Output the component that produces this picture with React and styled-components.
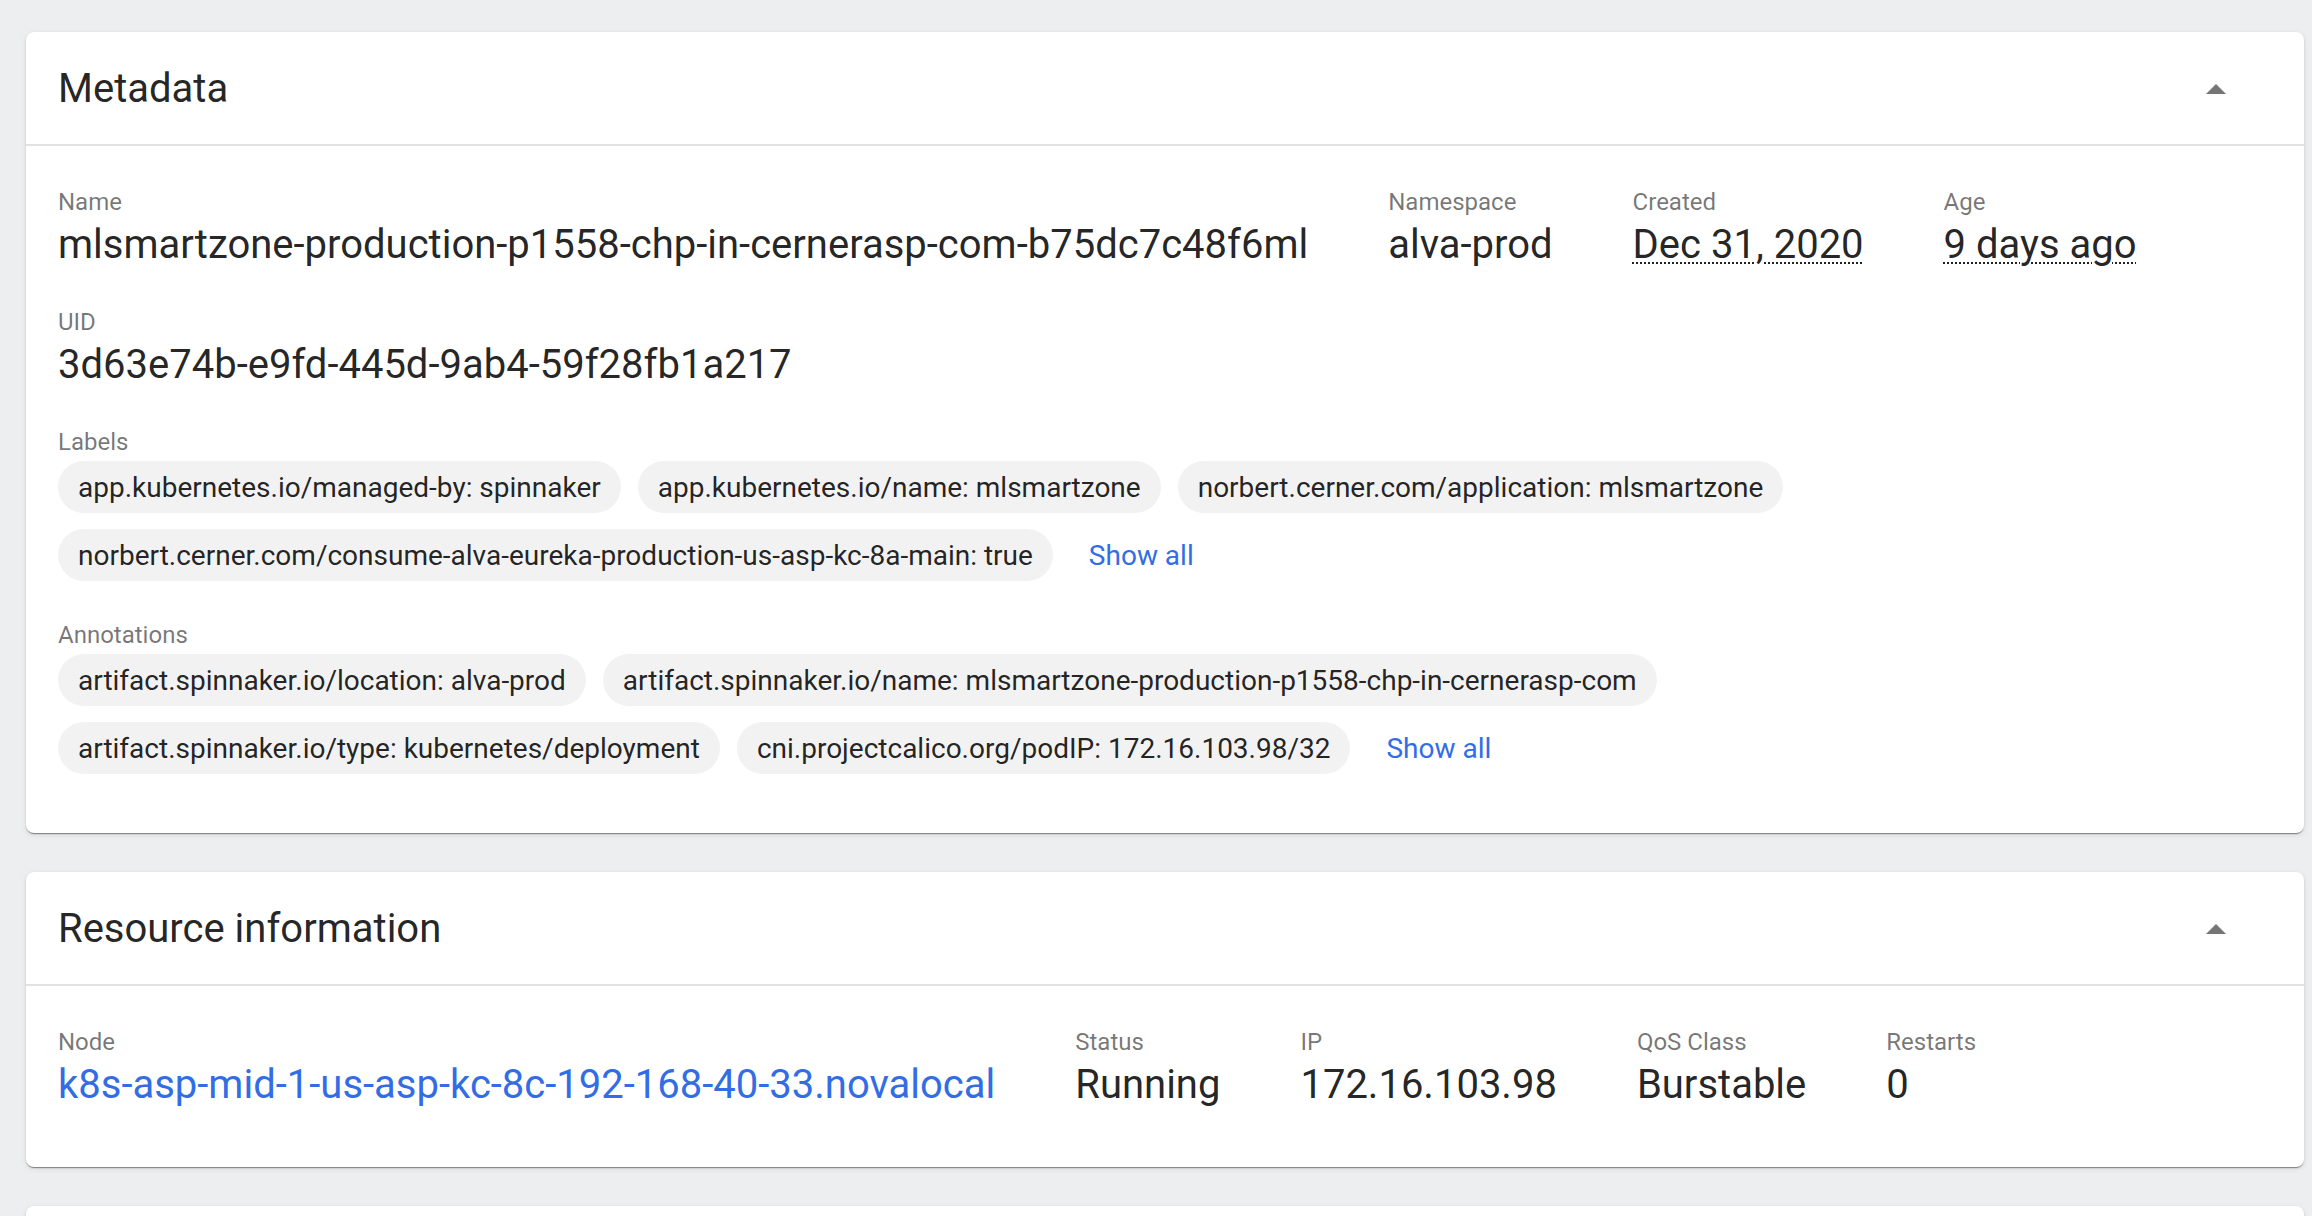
import styled, { createGlobalStyle } from "styled-components";

const GlobalStyle = createGlobalStyle`
  html, body {
    margin: 0;
    padding: 0;
    background: #edeef0;
    font-family: Roboto, "Liberation Sans", sans-serif;
  }
`;

const metaTop = [
  { label: "Name", value: "mlsmartzone-production-p1558-chp-in-cernerasp-com-b75dc7c48f6ml" },
  { label: "Namespace", value: "alva-prod" },
  { label: "Created", value: "Dec 31, 2020", dotted: true },
  { label: "Age", value: "9 days ago", dotted: true },
];

const labels = [
  "app.kubernetes.io/managed-by: spinnaker",
  "app.kubernetes.io/name: mlsmartzone",
  "norbert.cerner.com/application: mlsmartzone",
  "norbert.cerner.com/consume-alva-eureka-production-us-asp-kc-8a-main: true",
];

const annotations = [
  "artifact.spinnaker.io/location: alva-prod",
  "artifact.spinnaker.io/name: mlsmartzone-production-p1558-chp-in-cernerasp-com",
  "artifact.spinnaker.io/type: kubernetes/deployment",
  "cni.projectcalico.org/podIP: 172.16.103.98/32",
];

const resource = [
  { label: "Node", value: "k8s-asp-mid-1-us-asp-kc-8c-192-168-40-33.novalocal", link: true },
  { label: "Status", value: "Running" },
  { label: "IP", value: "172.16.103.98" },
  { label: "QoS Class", value: "Burstable" },
  { label: "Restarts", value: "0" },
];

const ArrowUp = () => (
  <svg width="20" height="10" viewBox="0 0 20 10">
    <path d="M0 10 L10 0 L20 10 Z" fill="#757575" />
  </svg>
);

const Card = ({ title, children }) => (
  <Panel>
    <Header>
      <Title>{title}</Title>
      <Toggle>
        <ArrowUp />
      </Toggle>
    </Header>
    {children}
  </Panel>
);

const Chips = ({ items }) => (
  <ChipWrap>
    {items.map((c) => (
      <Chip key={c}>{c}</Chip>
    ))}
    <ShowAll>Show all</ShowAll>
  </ChipWrap>
);

const App = () => {
  return (
    <Page>
      <GlobalStyle />
      <Card title="Metadata">
        <Body>
          <Row>
            {metaTop.map((f) => (
              <Field key={f.label}>
                <Label>{f.label}</Label>
                <Value dotted={f.dotted ? 1 : 0}>
                  <span>{f.value}</span>
                </Value>
              </Field>
            ))}
          </Row>
          <Row>
            <Field>
              <Label>UID</Label>
              <Value>3d63e74b-e9fd-445d-9ab4-59f28fb1a217</Value>
            </Field>
          </Row>
          <Section>
            <Label>Labels</Label>
            <Chips items={labels} />
          </Section>
          <Section>
            <Label>Annotations</Label>
            <Chips items={annotations} />
          </Section>
        </Body>
      </Card>
      <Card title="Resource information">
        <Body>
          <Row>
            {resource.map((f) => (
              <Field key={f.label}>
                <Label>{f.label}</Label>
                <Value link={f.link ? 1 : 0}>{f.value}</Value>
              </Field>
            ))}
          </Row>
        </Body>
      </Card>
      <Panel>
        <Header />
      </Panel>
    </Page>
  );
};

const Page = styled.div`
  display: flex;
  flex-direction: column;
  gap: 39px;
  padding: 32px 8px 0 26px;
  height: 1216px;
  box-sizing: border-box;
  overflow: hidden;
`;

const Panel = styled.div`
  flex-shrink: 0;
  background: #fff;
  border-radius: 8px;
  box-shadow: 0 2px 1px -1px rgba(0, 0, 0, 0.35), 0 1px 2px rgba(0, 0, 0, 0.16),
    0 2px 6px rgba(0, 0, 0, 0.08);
`;

const Header = styled.div`
  display: flex;
  align-items: center;
  justify-content: space-between;
  height: 112px;
  padding: 0 32px;
  border-bottom: 2px solid #e2e2e2;
`;

const Title = styled.h2`
  margin: 0;
  font-size: 40px;
  font-weight: 400;
  color: rgba(0, 0, 0, 0.87);
`;

const Toggle = styled.div`
  display: flex;
  align-items: center;
  margin-right: 46px;
  margin-top: 2px;
`;

const Body = styled.div`
  display: flex;
  flex-direction: column;
  gap: 40px;
  padding: 42px 32px 59px;
`;

const Row = styled.div`
  display: flex;
  gap: 80px;
`;

const Field = styled.div`
  display: flex;
  flex-direction: column;
`;

const Label = styled.div`
  font-size: 24px;
  color: rgba(0, 0, 0, 0.54);
  margin-bottom: 5px;
`;

const Value = styled.div`
  font-size: 40px;
  white-space: nowrap;
  color: ${(p) => (p.link ? "#326de6" : "rgba(0, 0, 0, 0.87)")};
  span {
    text-decoration: ${(p) => (p.dotted ? "underline dotted" : "none")};
    text-decoration-thickness: 2px;
    text-underline-offset: 4px;
  }
`;

const Section = styled.div`
  display: flex;
  flex-direction: column;
`;

const ChipWrap = styled.div`
  display: flex;
  flex-wrap: wrap;
  align-items: center;
  gap: 16px 17px;
`;

const Chip = styled.div`
  display: flex;
  align-items: center;
  height: 52px;
  padding: 0 20px;
  border-radius: 26px;
  background: #f2f2f2;
  font-size: 28px;
  color: rgba(0, 0, 0, 0.87);
  white-space: nowrap;
`;

const ShowAll = styled.button`
  border: none;
  background: none;
  padding: 0 19px;
  height: 52px;
  font-family: inherit;
  font-size: 28px;
  color: #326de6;
  cursor: pointer;
`;

export default App;
